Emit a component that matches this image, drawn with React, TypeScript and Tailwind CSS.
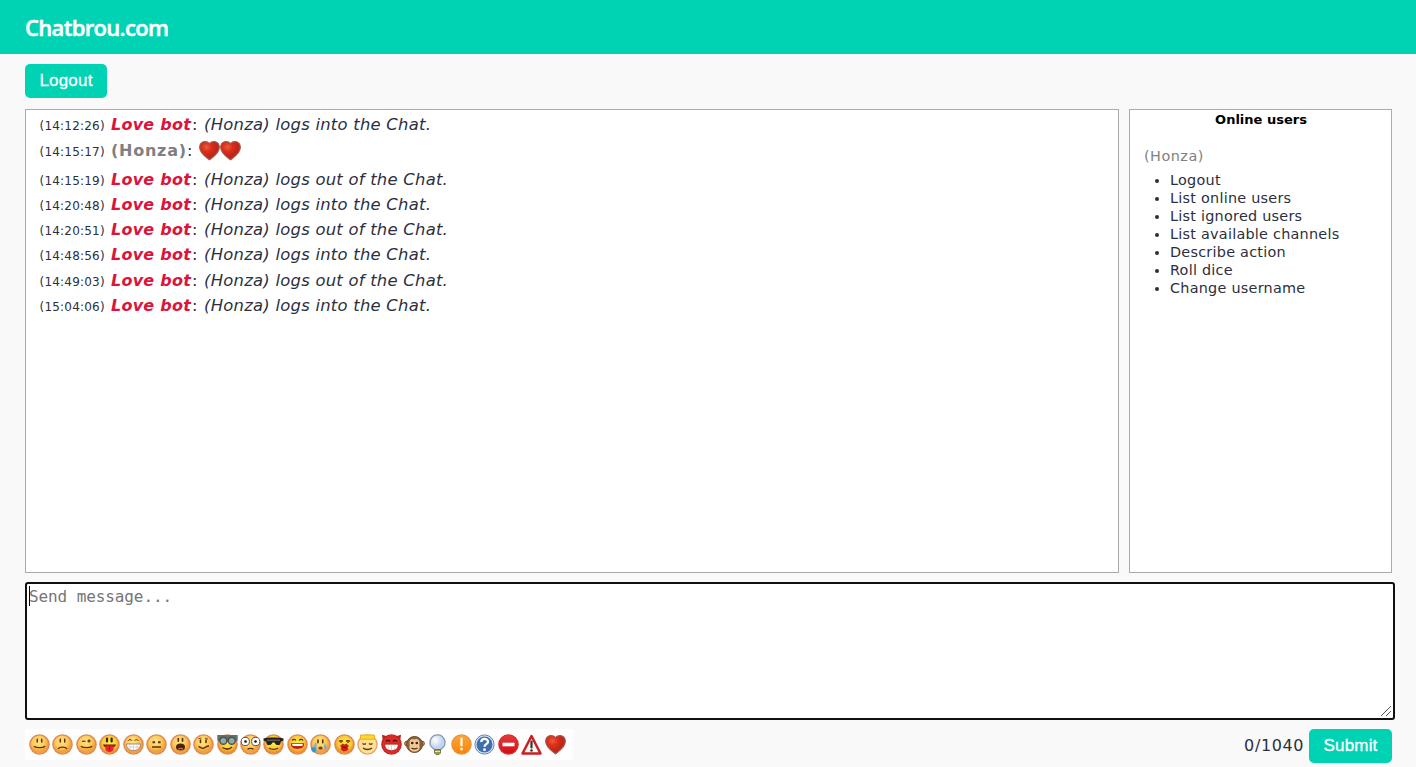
import type { ReactNode } from "react";

const messages = [
  { time: "14:12:26", action: "logs into the Chat." },
  { time: "14:15:17", hearts: true },
  { time: "14:15:19", action: "logs out of the Chat." },
  { time: "14:20:48", action: "logs into the Chat." },
  { time: "14:20:51", action: "logs out of the Chat." },
  { time: "14:48:56", action: "logs into the Chat." },
  { time: "14:49:03", action: "logs out of the Chat." },
  { time: "15:04:06", action: "logs into the Chat." },
];

const userMenu = [
  "Logout",
  "List online users",
  "List ignored users",
  "List available channels",
  "Describe action",
  "Roll dice",
  "Change username",
];

const dark = "#5b3207";

const eyes = (
  <path d="M8.300 5.300v2.600M12.700 5.300v2.600" stroke={dark} strokeWidth="1.500" strokeLinecap="round" />
);

const smile = <path d="M4.800 12.200c2.500 1.900 8.900 1.900 11.400 0" stroke={dark} strokeWidth="1.400" />;

function Face({ children, fill = "url(#face)", rim = "#dd8a52" }: { children: ReactNode; fill?: string; rim?: string }) {
  return (
    <>
      <circle cx="10.5" cy="10.5" r="9.6" fill={fill} stroke={rim} strokeWidth="1.4" />
      {children}
    </>
  );
}

const heart = (
  <path
    d="M10.500 19.800C8 17.500.7 13.500.7 7.200c0-3.400 2.300-5.600 5.200-5.600 2 0 3.600.9 4.600 2.100 1-1.200 2.600-2.100 4.600-2.100 2.900 0 5.200 2.200 5.200 5.600 0 6.300-7.300 10.300-9.800 12.600z"
    fill="url(#heart)"
    stroke="#a8544a"
    strokeWidth="1.2"
  />
);

const smileys: { name: string; art: ReactNode }[] = [
  { name: "smile", art: <Face>{eyes}{smile}</Face> },
  {
    name: "sad",
    art: <Face>{eyes}<path d="M6 14.800c2-2.200 7-2.200 9 0" stroke={dark} strokeWidth="1.4" /></Face>,
  },
  {
    name: "wink",
    art: (
      <Face>
        <path d="M6 7.500c1-.5 2.500-.5 3.500 0M13 5.500v3M11.500 7h3" stroke={dark} strokeWidth="1.3" />
        {smile}
      </Face>
    ),
  },
  {
    name: "tongue",
    art: (
      <Face fill="url(#yellow)">
        <path d="M8 4.500v3M12.600 4.500v3" stroke="#33250a" strokeWidth="2.2" strokeLinecap="round" />
        <path d="M4 10.500h13c-.5 2-2 3-4 3.500H8c-2-.5-3.500-1.500-4-3.500z" fill="#6d1d10" />
        <path d="M6.500 11.500h8v3c0 2-1.500 3.500-4 3.500s-4-1.500-4-3.500z" fill="#e5242c" />
        <path d="M10.500 12v4" stroke="#95131b" strokeWidth=".8" />
      </Face>
    ),
  },
  {
    name: "grin",
    art: (
      <Face>
        <path d="M5 6.800c1-1.600 3-1.600 4 0M11.500 6.800c1-1.600 3-1.600 4 0" stroke={dark} strokeWidth="1" />
        <path d="M3.500 10h14c0 4-2.500 6.500-7 6.500S3.500 14 3.500 10z" fill="#fff" stroke="#95725a" strokeWidth=".8" />
        <path d="M4.500 13h12M7 10v5.500M10.500 10v6M14 10v5.500" stroke="#c0c0ba" strokeWidth=".6" />
      </Face>
    ),
  },
  {
    name: "plain",
    art: (
      <Face>
        <path d="M6.500 8.300h2.600M12 8.300h2.600" stroke={dark} strokeWidth="1.9" />
        <path d="M6 13h9" stroke={dark} strokeWidth="1.5" />
      </Face>
    ),
  },
  {
    name: "surprise",
    art: (
      <Face>
        <path d="M8.300 4.500v2.600M12.500 4.500v2.600" stroke={dark} strokeWidth="1.7" strokeLinecap="round" />
        <ellipse cx="10.5" cy="13" rx="4.5" ry="3.5" fill="#482407" />
        <path d="M8 15.300c1.500-1.300 4-1.300 5 0" stroke="#b17b5a" strokeWidth="1.1" />
      </Face>
    ),
  },
  {
    name: "confused",
    art: (
      <Face>
        <path d="M7.500 6v2.500M13 6v2.500" stroke={dark} strokeWidth="1.6" strokeLinecap="round" />
        <path d="M5.500 4.800 8.300 4M12 4.200l3 .8" stroke={dark} strokeWidth=".8" />
        <path d="M5.500 12.500c1.500 0 2.500 2 4.500 1.800 2-.2 3-2.300 6-2.300" stroke={dark} strokeWidth="1.4" />
      </Face>
    ),
  },
  {
    name: "glasses",
    art: (
      <Face fill="url(#yellow)">
        <path d="M.3 1h20.400v5.500L18 8H3L.3 6.500z" fill="#62716b" />
        <circle cx="6.3" cy="6.8" r="3.5" fill="#9aa99d" stroke="#465451" strokeWidth="1.4" />
        <circle cx="14.7" cy="6.8" r="3.5" fill="#9aa99d" stroke="#465451" strokeWidth="1.4" />
        <path d="M5.500 13.500c3 2 6.500 2.300 9.500-.5" stroke={dark} strokeWidth="1.5" />
      </Face>
    ),
  },
  {
    name: "eek",
    art: (
      <Face>
        <circle cx="5.3" cy="7.5" r="4.1" fill="#fff" stroke="#5a5145" />
        <circle cx="15.7" cy="7.5" r="4.1" fill="#fff" stroke="#5a5145" />
        <circle cx="5.5" cy="7.5" r="1.3" fill="#111" />
        <circle cx="15.5" cy="7.5" r="1.3" fill="#111" />
        <path d="M7.500 15.300c1.500-1.300 4.500-1.300 6 0" stroke={dark} strokeWidth="1.4" />
      </Face>
    ),
  },
  {
    name: "cool",
    art: (
      <Face fill="url(#yellow)">
        <path d="M.5 4.500C5 3.300 16 3.300 20.500 4.500v2L18 7.500l-1 3c-2 1.200-4.500.5-5.500-2h-2c-1 2.500-3.500 3.200-5.500 2l-1-3-2.500-1z" fill="#25231f" />
        <path d="M4 6.200h13" stroke="#77766d" strokeWidth="1" />
        <path d="M6 14c2.500 1.800 6.500 1.800 9 0" stroke={dark} strokeWidth="1.4" />
      </Face>
    ),
  },
  {
    name: "laugh",
    art: (
      <Face fill="url(#yellow)">
        <path d="M5 6.500c1-1.500 3-1.500 4 0M12 6.500c1-1.500 3-1.500 4 0" stroke={dark} strokeWidth="1.2" />
        <path d="M3.800 9.300h13.400c0 3.700-2.300 5.700-6.700 5.700s-6.700-2-6.700-5.700z" fill="#c62016" />
        <path d="M5 10h11l-.8 2H5.800z" fill="#fff" />
      </Face>
    ),
  },
  {
    name: "cry",
    art: (
      <Face>
        <path d="M8 6v2.800M12.700 6v2.800" stroke={dark} strokeWidth="1.6" strokeLinecap="round" />
        <path d="M5.500 8.500 3 14v4.500h3.500V9zM14.500 9l-.3 4 1.300 4 1.500-3z" fill="#69b0dc" />
        <path d="M1.500 13c-1 3 .5 5 2.500 5s2.500-2 1.500-4z" fill="#3992ca" />
        <ellipse cx="10.5" cy="14" rx="2.2" ry="1.5" fill="#754014" />
      </Face>
    ),
  },
  {
    name: "kiss",
    art: (
      <Face fill="url(#yellow)">
        <path d="M5 7.500c1-1.300 3-1.300 4 0M12 7.500c1-1.300 3-1.300 4 0M7 7.500V9M14 7.500V9" stroke={dark} strokeWidth="1.2" />
        <path d="m10.500 10.500 2-1 2.500 2.500-1.500 1.500 1 1.700-2.500 2H9l-2.500-2 1-1.700L6 12l2.500-2.500z" fill="#ce2016" />
        <path d="M8 13.300h5" stroke="#731006" />
      </Face>
    ),
  },
  {
    name: "angel",
    art: (
      <Face fill="#ffdf92" rim="#dfa577">
        <path d="M3.500 1h14v4.200h-14z" fill="#ffd72e" stroke="#f0ad13" />
        <path d="M5.500 9.500c1 .8 2.500.8 3.500 0M12 9.500c1 .8 2.500.8 3.500 0M6 14c2.500 2 6.500 2 9 0" stroke={dark} strokeWidth="1.3" />
      </Face>
    ),
  },
  {
    name: "devil",
    art: (
      <>
        <path d="M2 8 1 .7l6.500 2zM19 8l1-7.300-6.500 2z" fill="#b51f20" />
        <Face fill="#df2926" rim="#c22828">
          <path d="M5 7.500c1-1.500 3-1.500 4 0M12 7.500c1-1.500 3-1.500 4 0" stroke="#53100e" strokeWidth="1.4" />
          <path d="M3.800 10.300h13.400c0 4.200-2.500 6.200-6.700 6.200s-6.700-2-6.700-6.200z" fill="#fff" stroke="#811b18" strokeWidth=".6" />
          <path d="M7.300 10.500v5M10.500 10.500v6M13.700 10.500v5" stroke="#d1b5b0" strokeWidth=".6" />
        </Face>
      </>
    ),
  },
  {
    name: "monkey",
    art: (
      <>
        <circle cx="3" cy="9.5" r="2.4" fill="#ca9b67" stroke="#74502d" />
        <circle cx="18" cy="9.5" r="2.4" fill="#ca9b67" stroke="#74502d" />
        <circle cx="10.5" cy="10.5" r="8" fill="#916236" stroke="#6b4828" />
        <path d="M10.500 5.500c-2-1.500-5 0-5 3 0 1.500.5 2 0 4-.5 3.500 2 5 5 5s5.500-1.500 5-5c-.5-2 0-2.500 0-4 0-3-3-4.500-5-3z" fill="#efc999" />
        <circle cx="8.2" cy="9" r="1.3" fill="#35241b" />
        <circle cx="12.8" cy="9" r="1.3" fill="#35241b" />
        <path d="M7.500 14c1.500 1.200 4.500 1.200 6 0" stroke={dark} strokeWidth="1.3" />
      </>
    ),
  },
  {
    name: "idea",
    art: (
      <>
        <path d="M10.500.8A7.500 7.500 0 0 0 6 14.300L8 16h5l2-1.700A7.500 7.500 0 0 0 10.500.8z" fill="url(#bulb)" stroke="#8798b2" strokeWidth="1.3" />
        <path d="M7.500 15.500h6V19L12 20.500H9L7.500 19z" fill="#a19a3c" stroke="#68683e" strokeWidth=".8" />
        <path d="M8 17.500h5" stroke="#eee9a0" />
      </>
    ),
  },
  {
    name: "important",
    art: (
      <Face fill="url(#orange)" rim="#e99435">
        <path d="M10.500 4.800v6.500" stroke="#fff3cf" strokeWidth="2.4" strokeLinecap="round" />
        <circle cx="10.5" cy="15" r="1.5" fill="#fff3cf" />
      </Face>
    ),
  },
  {
    name: "question",
    art: (
      <>
        <circle cx="10.5" cy="10.5" r="9.6" fill="#d8e5f5" stroke="#6485b5" strokeWidth="1" />
        <circle cx="10.5" cy="10.5" r="8" fill="#416fae" />
        <path d="M7.300 8c0-4 6.700-4 6.700-.3 0 2.500-3.500 2.300-3.500 5" stroke="#fff" strokeWidth="2.3" />
        <circle cx="10.5" cy="15.7" r="1.4" fill="#fff" />
      </>
    ),
  },
  {
    name: "stop",
    art: (
      <Face fill="url(#red)" rim="#d92c2c">
        <path d="M4.500 8.700h12v3.600h-12z" fill="#fff" />
      </Face>
    ),
  },
  {
    name: "warning",
    art: (
      <>
        <path d="m10.500 2 9 17.500h-18z" fill="#f7f5f1" stroke="#c92022" strokeWidth="2.5" strokeLinejoin="round" />
        <path d="M10.500 7.500v6" stroke="#383838" strokeWidth="2.2" strokeLinecap="round" />
        <circle cx="10.5" cy="16.5" r="1.3" fill="#383838" />
      </>
    ),
  },
  { name: "heart", art: heart },
];

function Smiley({ name, children }: { name: string; children: ReactNode }) {
  return (
    <svg viewBox="0 0 21 21" fill="none" aria-label={name} className="h-[21px] w-[21px] shrink-0">
      {children}
    </svg>
  );
}

function Gradients() {
  return (
    <svg className="absolute h-0 w-0" aria-hidden="true">
      <defs>
        <radialGradient id="face" cx=".45" cy=".35">
          <stop offset="0" stopColor="#ffe485" />
          <stop offset=".65" stopColor="#fec95c" />
          <stop offset="1" stopColor="#f2a043" />
        </radialGradient>
        <radialGradient id="yellow" cx=".5" cy=".4">
          <stop offset="0" stopColor="#ffed45" />
          <stop offset=".7" stopColor="#fccb35" />
          <stop offset="1" stopColor="#ed9233" />
        </radialGradient>
        <radialGradient id="heart" cx=".35" cy=".3">
          <stop offset="0" stopColor="#ea5c40" />
          <stop offset=".5" stopColor="#dc3018" />
          <stop offset="1" stopColor="#c0261a" />
        </radialGradient>
        <radialGradient id="bulb" cx=".35" cy=".35">
          <stop offset="0" stopColor="#ffffff" />
          <stop offset="1" stopColor="#bfd4ef" />
        </radialGradient>
        <linearGradient id="orange" x2="0" y2="1">
          <stop stopColor="#f9a63c" />
          <stop offset="1" stopColor="#f98208" />
        </linearGradient>
        <linearGradient id="red" x2="0" y2="1">
          <stop stopColor="#e33b3d" />
          <stop offset="1" stopColor="#d50b12" />
        </linearGradient>
      </defs>
    </svg>
  );
}

export default function App() {
  return (
    <div className="flex h-[767px] w-[1416px] flex-col overflow-hidden bg-[#f9f9f9] font-['DejaVu_Sans',sans-serif] text-[#2b2f3e]">
      <Gradients />
      <header className="flex h-[54px] shrink-0 items-center bg-[#00d2b4] pb-px pl-[25px]">
        <h1 className="font-['Open_Sans',sans-serif] text-[22px] leading-none font-semibold tracking-[-0.67px] whitespace-nowrap text-white [-webkit-text-stroke:0.5px_white]">
          Chatbrou.com
        </h1>
      </header>

      <main className="flex flex-col pt-[10px] pr-[21px] pl-[25px]">
        <button className="h-[34px] w-[82px] rounded-[5px] bg-[#00d2b4] font-['Liberation_Sans',sans-serif] text-[17px] tracking-[0.2px] text-white [-webkit-text-stroke:0.3px_white]">
          Logout
        </button>

        <div className="mt-[11px] flex h-[464px] gap-[10px]">
          <section className="w-[1094px] border border-[#ababab] bg-white pt-[2px] pl-[13.5px]">
            {messages.map((message) => (
              <div
                key={message.time}
                className={`flex items-center whitespace-nowrap ${message.hearts ? "h-[30px] pb-[3px]" : "h-[25.2px]"}`}
              >
                <span className="w-[71.5px] pt-[2px] text-[12px] tracking-[0.2px]">({message.time})</span>
                {message.hearts ? (
                  <>
                    <b className="w-[76px] text-base leading-5 tracking-[0.75px] text-[#808080]">(Honza)</b>
                    <span className="w-[12px]">:</span>
                    <span className="flex pb-px">
                      <Smiley name="heart">{heart}</Smiley>
                      <Smiley name="heart">{heart}</Smiley>
                    </span>
                  </>
                ) : (
                  <>
                    <b className="w-[81px] text-base leading-5 tracking-[0.25px] text-[#dc143c] italic">Love bot</b>
                    <span className="w-[12px]">:</span>
                    <i className="text-[16.4px] leading-5 tracking-[0.25px]">(Honza) {message.action}</i>
                  </>
                )}
              </div>
            ))}
          </section>

          <aside className="w-[263px] border border-[#ababab] bg-white">
            <h2 className="pt-[2px] pl-px text-center text-[13px] leading-4 font-bold text-black">Online users</h2>
            <p className="mt-[19px] pl-[14px] text-[14.4px] leading-[18px] tracking-[0.5px] text-[#808080]">(Honza)</p>
            <ul className="mt-[6px] list-disc pl-[40px] text-[14.4px] leading-[18px] tracking-[0.25px]">
              {userMenu.map((item) => (
                <li key={item}>{item}</li>
              ))}
            </ul>
          </aside>
        </div>

        <div className="mt-[9px] flex h-[138px] rounded-[3px] border-2 border-[#101010] bg-white">
          <div className="mt-[2px] ml-[2px] h-[20px] w-px shrink-0 bg-black" />
          <div className="-ml-px pt-[3px] font-['DejaVu_Sans_Mono',monospace] text-base leading-5 tracking-[-0.1px] text-[#757575]">
            Send message...
          </div>
          <svg viewBox="0 0 12 12" className="mt-auto mr-px mb-px ml-auto h-3 w-3" stroke="#555" strokeWidth="1">
            <path d="M1 11 11 1M6 11l5-5" />
          </svg>
        </div>

        <footer className="flex pt-[9px] pr-[3px]">
          <div className="flex h-[31px] w-[548px] gap-[2.45px] bg-[#fefefe] pt-[5px] pl-[4px]">
            {smileys.map(({ name, art }) => (
              <Smiley key={name} name={name}>
                {art}
              </Smiley>
            ))}
          </div>
          <span className="mr-[5px] ml-auto pt-[5px] text-base leading-6 tracking-[0.6px]">0/1040</span>
          <button className="h-[34px] w-[83px] rounded-[5px] bg-[#00d2b4] font-['Liberation_Sans',sans-serif] text-[17px] tracking-[0.2px] text-white [-webkit-text-stroke:0.3px_white]">
            Submit
          </button>
        </footer>
      </main>
    </div>
  );
}
